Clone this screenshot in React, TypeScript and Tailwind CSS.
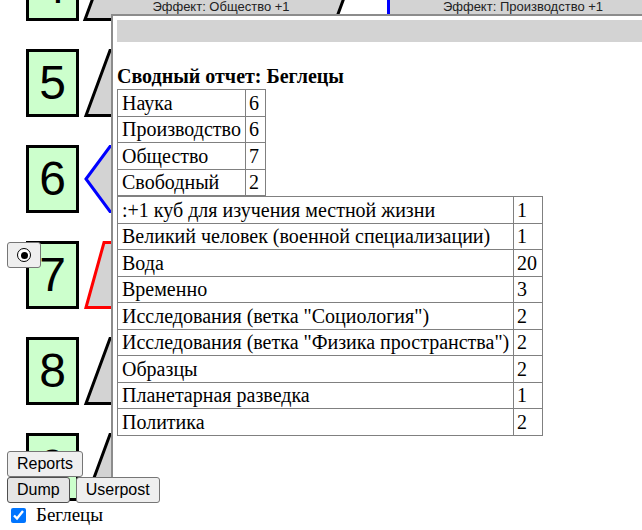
import React from 'react';

type Shape = 'para' | 'chevron' | 'trap';

interface Row {
  num: number;
  shape: Shape;
  color: string;
}

const rows: Row[] = [
  { num: 4, shape: 'para', color: '#000000' },
  { num: 5, shape: 'para', color: '#000000' },
  { num: 6, shape: 'chevron', color: '#0000ff' },
  { num: 7, shape: 'trap', color: '#ff0000' },
  { num: 8, shape: 'para', color: '#000000' },
  { num: 9, shape: 'para', color: '#000000' },
];

const summary: [string, number][] = [
  ['Наука', 6],
  ['Производство', 6],
  ['Общество', 7],
  ['Свободный', 2],
];

const details: [string, number][] = [
  [':+1 куб для изучения местной жизни', 1],
  ['Великий человек (военной специализации)', 1],
  ['Вода', 20],
  ['Временно', 3],
  ['Исследования (ветка "Социология")', 2],
  ['Исследования (ветка "Физика пространства")', 2],
  ['Образцы', 2],
  ['Планетарная разведка', 1],
  ['Политика', 2],
];

function RowShape({ row }: { row: Row }) {
  let points = '';
  if (row.shape === 'chevron') {
    points = '7,34 31,1.5 600,1.5 600,66.5 31,66.5';
  } else if (row.shape === 'trap') {
    points = '7,66.5 25,1.5 600,1.5 600,66.5';
  } else {
    points = '7,66.5 31,1.5 600,1.5 600,66.5';
  }

  if (row.num === 4) {
    return (
      <svg width="563" height="68" className="block shrink-0 overflow-visible">
        <polygon points="6,66.5 30,1.5 281,1.5 257,66.5" fill="#d3d3d3" stroke="#000" strokeWidth="3" />
        <text x="142" y="58" textAnchor="middle" fontFamily="'Liberation Sans', Arial, sans-serif" fontSize="13" fill="#222">
          Эффект: Общество +1
        </text>
        <rect x="309.5" y="1.5" width="300" height="65" fill="#d3d3d3" stroke="#0000ff" strokeWidth="3" />
        <text x="444" y="58" textAnchor="middle" fontFamily="'Liberation Sans', Arial, sans-serif" fontSize="13" fill="#222">
          Эффект: Производство +1
        </text>
      </svg>
    );
  }

  return (
    <svg width="563" height="68" className="block shrink-0 overflow-visible">
      <polygon points={points} fill="#d3d3d3" stroke={row.color} strokeWidth="3" />
    </svg>
  );
}

function TreeRow({ row }: { row: Row }) {
  return (
    <div className="relative flex h-[68px] items-start">
      <div className="ml-[26px] flex h-[68px] w-[53px] shrink-0 items-center justify-center border-[3px] border-black bg-[#ccffcc] font-['Liberation_Sans',Arial,sans-serif] text-[48px] leading-none text-black">
        {row.num}
      </div>
      <RowShape row={row} />
      {row.num === 7 && (
        <button className="absolute left-[7px] top-[1px] flex h-[26px] w-[34px] items-center justify-center rounded-[3px] border border-[#767676] bg-[#efefef]">
          <span className="flex h-[14px] w-[14px] items-center justify-center rounded-full border-[1.5px] border-black bg-white">
            <span className="h-[7px] w-[7px] rounded-full bg-black" />
          </span>
        </button>
      )}
    </div>
  );
}

export default function App() {
  return (
    <div className="relative h-[530px] w-[642px] overflow-hidden bg-white font-['Liberation_Serif','Times_New_Roman',serif] text-black">
      {/* tree canvas */}
      <div className="flex h-[451px] flex-col">
        <div className="-mt-[47px] flex flex-col gap-[28px]">
          {rows.map((r) => (
            <TreeRow key={r.num} row={r} />
          ))}
        </div>
      </div>

      {/* summary popup */}
      <div className="absolute left-[111px] top-[14px] h-[488px] w-[560px] border-l-2 border-t-2 border-[#8c8c8c] bg-white pl-[4px] pt-[4px]">
        <div className="h-[22px] bg-[#d3d3d3]" />
        <h3 className="mt-[21px] text-[20px] font-bold leading-[26px]">Сводный отчет: Беглецы</h3>
        <table className="w-[148px] table-fixed border-collapse text-[20px] leading-[22px]">
          <tbody>
            {summary.map(([name, val]) => (
              <tr key={name} className="h-[26.5px]">
                <td className="w-[128px] border border-[#808080] px-[4px] py-0 whitespace-nowrap">{name}</td>
                <td className="w-[20px] border border-[#808080] px-[3px] py-0">{val}</td>
              </tr>
            ))}
          </tbody>
        </table>
        <table className="w-[425px] table-fixed border-collapse text-[20px] leading-[22px]">
          <tbody>
            {details.map(([name, val]) => (
              <tr key={name} className="h-[26.5px]">
                <td className="w-[396px] border border-[#808080] px-[4px] py-0 whitespace-nowrap">{name}</td>
                <td className="w-[29px] border border-[#808080] px-[3px] py-0">{val}</td>
              </tr>
            ))}
          </tbody>
        </table>
      </div>

      {/* bottom controls */}
      <div className="relative z-10 px-[7px] font-['Liberation_Sans',Arial,sans-serif] text-[16px]">
        <div className="flex">
          <button className="h-[26px] rounded-[3px] border border-[#767676] bg-[#efefef] px-[9px] leading-none">Reports</button>
        </div>
        <div className="flex gap-[6px]">
          <button className="h-[26px] rounded-[3px] border border-[#4f4f4f] bg-[#e5e5e5] px-[9px] leading-none">Dump</button>
          <button className="h-[26px] rounded-[3px] border border-[#767676] bg-[#efefef] px-[9px] leading-none">Userpost</button>
        </div>
        <label className="flex items-center gap-[10px] font-['Liberation_Serif','Times_New_Roman',serif] text-[19px] leading-[24px]">
          <input type="checkbox" defaultChecked className="ml-[4px] h-[15px] w-[15px]" />
          Беглецы
        </label>
      </div>
    </div>
  );
}
